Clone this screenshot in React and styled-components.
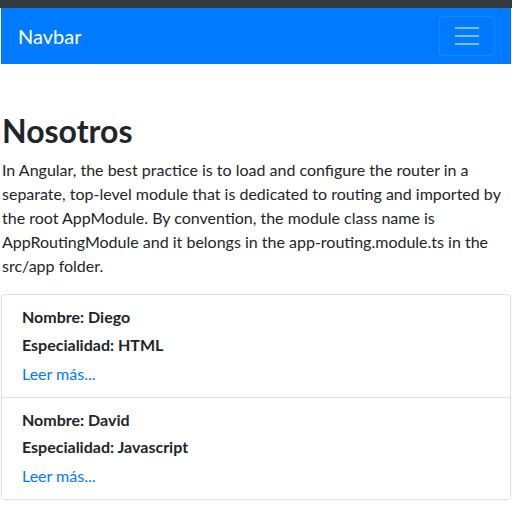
import React from 'react';
import styled, { createGlobalStyle } from 'styled-components';

const GlobalStyle = createGlobalStyle`
  html, body {
    margin: 0;
    padding: 0;
    background: #fff;
  }
  body {
    font-family: Lato, 'Open Sans', sans-serif;
    font-size: 16px;
    line-height: 1.5;
    color: #212529;
  }
  * {
    box-sizing: border-box;
  }
`;

const TopStrip = styled.div`
  height: 8px;
  background: #343a40;
`;

const Page = styled.div`
  padding: 0 1px;
`;

const Navbar = styled.nav`
  height: 56px;
  background: #007bff;
  display: flex;
  align-items: center;
  justify-content: space-between;
  padding: 0 16px 0 17px;
`;

const Brand = styled.a`
  color: #fff;
  font-size: 20px;
  line-height: 30px;
  text-decoration: none;
`;

const Toggler = styled.button`
  width: 56px;
  height: 40px;
  background: transparent;
  border: 1px solid rgba(255, 255, 255, 0.1);
  border-radius: 4px;
  display: flex;
  align-items: center;
  justify-content: center;
  padding: 0;
`;

const Content = styled.main`
  padding-top: 48px;
`;

const Title = styled.h1`
  margin: 0 0 8px;
  padding-left: 1px;
  font-size: 32px;
  font-weight: 700;
  line-height: 1.2;
`;

const Lead = styled.p`
  margin: 0 0 16px;
  padding-left: 1px;
  font-size: 16px;
  line-height: 24px;
`;

const Card = styled.ul`
  list-style: none;
  margin: 0;
  padding: 0;
  border: 1px solid rgba(0, 0, 0, 0.125);
  border-radius: 4px;
`;

const Item = styled.li`
  padding: 12px 20px 11px;
  & + & {
    border-top: 1px solid rgba(0, 0, 0, 0.125);
  }
`;

const Field = styled.h6`
  margin: 0 0 8px;
  font-size: 16px;
  font-weight: 700;
  line-height: 1.2;
`;

const MoreLink = styled.a`
  display: block;
  color: #007bff;
  text-decoration: none;
  line-height: 24px;
`;

const people = [
  { name: 'Diego', skill: 'HTML' },
  { name: 'David', skill: 'Javascript' },
];

const MenuIcon = () => (
  <svg width="24" height="20" viewBox="0 0 24 20">
    <g stroke="rgba(255,255,255,0.5)" strokeWidth="2">
      <line x1="0" y1="2" x2="24" y2="2" />
      <line x1="0" y1="10" x2="24" y2="10" />
      <line x1="0" y1="18" x2="24" y2="18" />
    </g>
  </svg>
);

const App = () => (
  <>
    <GlobalStyle />
    <TopStrip />
    <Page>
      <Navbar>
        <Brand href="#">Navbar</Brand>
        <Toggler aria-label="Toggle navigation">
          <MenuIcon />
        </Toggler>
      </Navbar>
      <Content>
        <Title>Nosotros</Title>
        <Lead>
          In Angular, the best practice is to load and configure the router in a
          separate, top-level module that is dedicated to routing and imported by
          the root AppModule. By convention, the module class name is
          AppRoutingModule and it belongs in the app-routing.module.ts in the
          src/app folder.
        </Lead>
        <Card>
          {people.map((p) => (
            <Item key={p.name}>
              <Field>Nombre: {p.name}</Field>
              <Field>Especialidad: {p.skill}</Field>
              <MoreLink href="#">Leer más...</MoreLink>
            </Item>
          ))}
        </Card>
      </Content>
    </Page>
  </>
);

export default App;
